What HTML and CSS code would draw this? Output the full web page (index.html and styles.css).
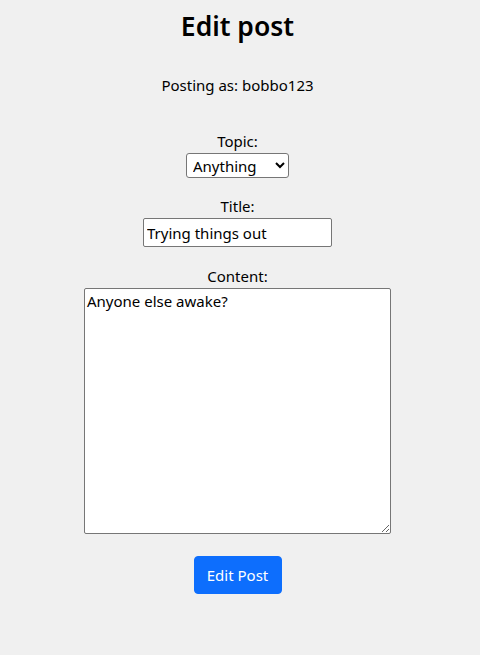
FILE: index.html
```html
<!DOCTYPE html>
<html lang="en">
<head>
<meta charset="utf-8">
<title>Edit post</title>
<link rel="stylesheet" href="styles.css">
</head>
<body>
<main class="page">
  <h1 class="title">Edit post</h1>
  <p class="author">Posting as: bobbo123</p>
  <form class="form">
    <label class="label" for="topic">Topic:</label>
    <select class="select" id="topic">
      <option>Anything</option>
    </select>
    <label class="label label-gap" for="title">Title:</label>
    <input class="input" id="title" type="text" value="Trying things out">
    <label class="label label-gap2" for="content">Content:</label>
    <textarea class="textarea" id="content">Anyone else awake?</textarea>
    <button class="btn" type="button">Edit Post</button>
  </form>
</main>
</body>
</html>
```
FILE: styles.css
```css
html, body {
  margin: 0;
  padding: 0;
  background: #f0f0f0;
}
body {
  font-family: "Noto Sans", "Open Sans", sans-serif;
  font-size: 15px;
  color: #212529;
}
.page {
  display: flex;
  flex-direction: column;
  align-items: center;
  padding: 6px 5px 0 0;
}
.title {
  margin: 0;
  font-size: 26.5px;
  line-height: 40px;
  font-weight: 600;
  color: #000;
}
.author {
  margin: 27px 0 0;
  line-height: 24px;
  color: #000;
}
.form {
  display: flex;
  flex-direction: column;
  align-items: center;
  margin-top: 32px;
}
.label {
  display: block;
  line-height: 24px;
  color: #000;
}
.label-gap { margin-top: 16px; }
.label-gap2 { margin-top: 17px; }
.select {
  width: 103px;
  height: 25px;
  font-family: inherit;
  font-size: 15px;
  border: 1px solid #767676;
  border-radius: 3px;
  background: #fff;
  color: #000;
  padding: 0 0 0 2px;
  box-sizing: border-box;
}
.input {
  width: 189px;
  height: 29px;
  box-sizing: border-box;
  font-family: inherit;
  font-size: 15px;
  border: 1px solid #767676;
  border-radius: 2px;
  padding: 1px 3px;
  background: #fff;
  color: #000;
}
.textarea {
  width: 307px;
  height: 246px;
  box-sizing: border-box;
  font-family: inherit;
  font-size: 15px;
  border: 1px solid #767676;
  border-radius: 2px;
  padding: 2px 2px;
  background: #fff;
  color: #000;
  resize: vertical;
}
.btn {
  margin-top: 22px;
  width: 88px;
  height: 38px;
  background: #0d6efd;
  border: 1px solid #0d6efd;
  border-radius: 4px;
  color: #fff;
  font-family: inherit;
  font-size: 15px;
  line-height: 1.5;
  padding: 0;
}
```
